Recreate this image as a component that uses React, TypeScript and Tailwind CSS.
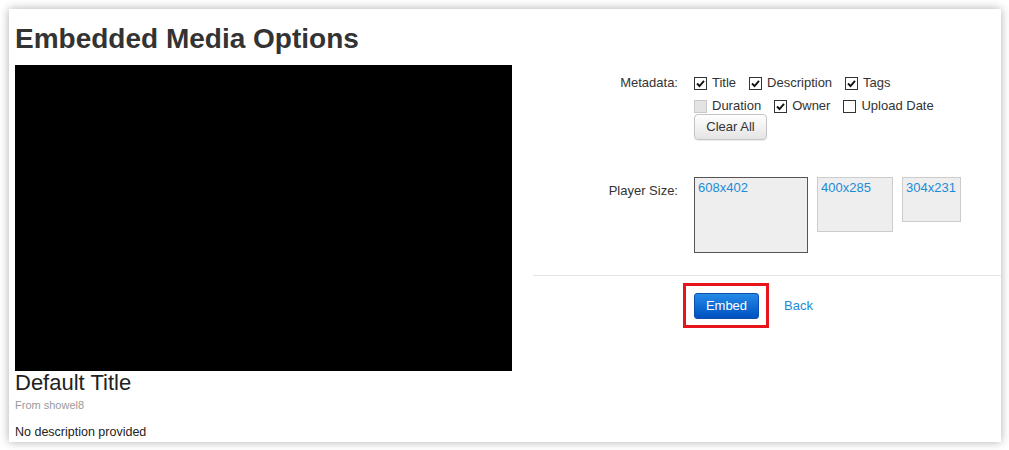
import React from 'react';

type Box = { label: string; selected?: boolean; className: string };

const SIZES: Box[] = [
  { label: '608x402', selected: true, className: 'w-[114px] h-[76px]' },
  { label: '400x285', className: 'w-[76px] h-[55px]' },
  { label: '304x231', className: 'w-[59px] h-[45px]' },
];

function Check({ state }: { state: 'on' | 'off' | 'disabled' }) {
  if (state === 'disabled') {
    return <span className="block h-[13px] w-[13px] shrink-0 border border-[#c9c9c9] bg-[#e3e3e3]" />;
  }
  return (
    <span className="flex h-[13px] w-[13px] shrink-0 items-center justify-center border border-[#333] bg-white">
      {state === 'on' && (
        <svg width="9" height="9" viewBox="0 0 9 9">
          <path d="M1 4.5 L3.5 7 L8 1.8" fill="none" stroke="#111" strokeWidth="1.9" />
        </svg>
      )}
    </span>
  );
}

function Option({ label, state }: { label: string; state: 'on' | 'off' | 'disabled' }) {
  return (
    <label className="flex items-center">
      <Check state={state} />
      <span className="ml-[5px]">{label}</span>
    </label>
  );
}

export default function App() {
  return (
    <div className="min-h-screen bg-white p-[9px] font-['Liberation_Sans',Arial,sans-serif] text-[#333]">
      <div className="h-[433px] w-[992px] overflow-hidden bg-white pl-[6px] pt-[14px] shadow-[0_0_9px_rgba(0,0,0,0.32)]">
        <h1 className="text-[28px] font-bold leading-[32px] text-[#333]">Embedded Media Options</h1>

        <div className="mt-[10px] flex">
          {/* player preview */}
          <div className="w-[497px]">
            <div className="h-[306px] w-[497px] bg-black" />
            <h2 className="text-[22px] leading-[24px] text-[#222]">Default Title</h2>
            <p className="mt-[4px] text-[11px] leading-[13px] text-[#999]">From showel8</p>
            <p className="mt-[13px] text-[12.5px] leading-[15px] text-[#222]">No description provided</p>
          </div>

          {/* options */}
          <div className="ml-[21px] flex-1 pt-[6px] text-[13px]">
            <div className="flex">
              <div className="w-[145px] text-right leading-[24px]">Metadata:</div>
              <div className="ml-[16px]">
                <div className="flex h-[24px] items-center gap-[13px]">
                  <Option label="Title" state="on" />
                  <Option label="Description" state="on" />
                  <Option label="Tags" state="on" />
                </div>
                <div className="mt-[1px] flex h-[20px] items-center gap-[13px]">
                  <Option label="Duration" state="disabled" />
                  <Option label="Owner" state="on" />
                  <Option label="Upload Date" state="off" />
                </div>
                <button className="mt-[-2px] h-[26px] w-[73px] rounded-[4px] border border-[#c4c4c4] bg-gradient-to-b from-white to-[#e4e4e4] text-[13px] text-[#333] shadow-[0_1px_1px_rgba(0,0,0,0.08)]">
                  Clear All
                </button>
              </div>
            </div>

            <div className="mt-[37px] flex">
              <div className="w-[145px] pt-[6px] text-right leading-[16px]">Player Size:</div>
              <div className="ml-[16px] flex items-start gap-[9px]">
                {SIZES.map((s) => (
                  <div
                    key={s.label}
                    className={`${s.className} border bg-[#eee] pl-[3px] pt-[2px] leading-[16px] text-[#1a8cd8] ${
                      s.selected ? 'border-[#555]' : 'border-[#ccc]'
                    }`}
                  >
                    {s.label}
                  </div>
                ))}
              </div>
            </div>

            <div className="mt-[22px] border-t border-[#e3e3e3]" />

            <div className="mt-[7px] flex items-center pl-[150px]">
              <div className="border-[3px] border-[#e8141c] pb-[6px] pl-[8px] pr-[7px] pt-[7px]">
                <button className="block h-[26px] w-[65px] rounded-[3px] border border-[#0a4fae] bg-gradient-to-b from-[#258ae8] to-[#0050c0] text-[13px] text-white">
                  Embed
                </button>
              </div>
              <a href="#" className="ml-[15px] pt-[1px] text-[13px] text-[#1a8cd8]">
                Back
              </a>
            </div>
          </div>
        </div>
      </div>
    </div>
  );
}
